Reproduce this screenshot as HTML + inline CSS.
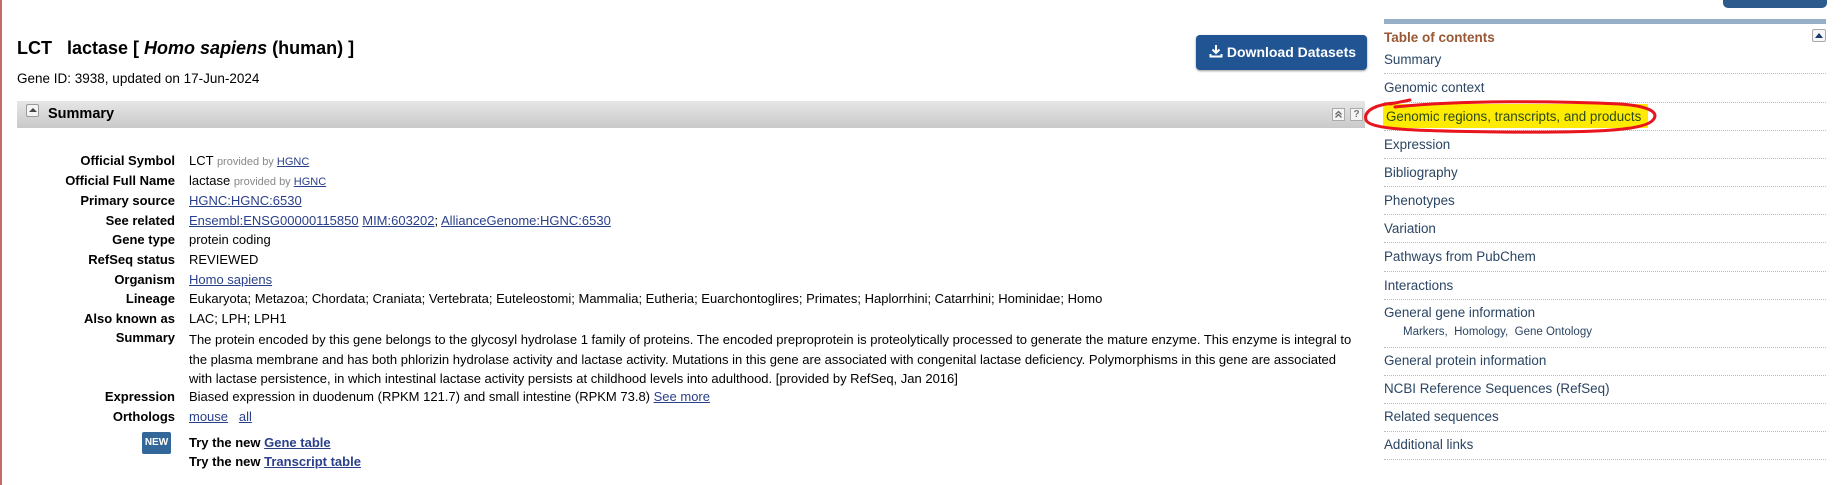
<!DOCTYPE html>
<html><head><meta charset="utf-8"><style>
*{margin:0;padding:0;box-sizing:border-box}
body{width:1842px;height:485px;background:#fff;font-family:"Liberation Sans",Arial,sans-serif;color:#000;position:relative;overflow:hidden}
.a{position:absolute;white-space:nowrap}
a{color:#2a3f8a;text-decoration:underline}
.lab{position:absolute;right:1667px;font-weight:bold;font-size:13px;white-space:nowrap;text-align:right}
.val{position:absolute;left:189px;font-size:13px;white-space:nowrap}
.pb{color:#888;font-size:11px}
.toc{position:absolute;left:1384px;width:442px;font-size:13.4px;color:#2b4563}
.sep{position:absolute;left:1384px;width:442px;border-top:1px dotted #bbb;height:0}
</style></head><body>
<div class="a" style="left:0;top:0;width:2px;height:485px;background:#c26a6a"></div>
<div class="a" style="left:1723px;top:-6px;width:104px;height:14px;background:#2d5b8e;border-radius:0 0 5px 5px"></div>

<div class="a" style="left:17px;top:38px;font-size:18px;font-weight:bold">LCT&nbsp;&nbsp; lactase [ <i>Homo sapiens</i> (human) ]</div>
<div class="a" style="left:17px;top:71px;font-size:13.5px">Gene ID: 3938, updated on 17-Jun-2024</div>

<div class="a" style="left:1196px;top:35px;width:171px;height:35px;background:#205493;border-radius:4px;box-shadow:0 1px 2px #999;color:#fff;font-weight:bold;font-size:14px;line-height:35px;padding-left:13px">
<svg width="14" height="14" viewBox="0 0 14 14" style="vertical-align:-1px"><path d="M7 1v8M3.5 5.5L7 9l3.5-3.5M1.5 10v2.5h11V10" stroke="#fff" stroke-width="2" fill="none"/></svg> Download Datasets</div>

<div class="a" style="left:17px;top:101px;width:1348px;height:27px;background:linear-gradient(#e6e6e6,#c9c9c9)"></div>
<div class="a" style="left:26px;top:104px;width:13px;height:13px;border:1px solid #999;border-radius:2px;background:#f4f4f4"><div style="position:absolute;left:2px;top:3px;border-left:4px solid transparent;border-right:4px solid transparent;border-bottom:4px solid #444"></div></div>
<div class="a" style="left:48px;top:106px;font-size:14.5px;font-weight:bold">Summary</div>
<div class="a" style="left:1332px;top:108px;width:13px;height:13px;border:1px solid #aaa;background:#f4f4f4"><svg width="11" height="11" style="position:absolute;left:0;top:0"><path d="M2.5 5.5L5.5 2.5L8.5 5.5M2.5 8.5L5.5 5.5L8.5 8.5" stroke="#666" stroke-width="1.3" fill="none"/></svg></div>
<div class="a" style="left:1350px;top:108px;width:13px;height:13px;border:1px solid #aaa;background:#f4f4f4;font-size:10px;font-weight:bold;line-height:12px;text-align:center;color:#777">?</div>

<div class="lab" style="top:153px">Official Symbol</div><div class="val" style="top:153px">LCT <span class="pb">provided by <a>HGNC</a></span></div>
<div class="lab" style="top:173px">Official Full Name</div><div class="val" style="top:173px">lactase <span class="pb">provided by <a>HGNC</a></span></div>
<div class="lab" style="top:193px">Primary source</div><div class="val" style="top:193px"><a>HGNC:HGNC:6530</a></div>
<div class="lab" style="top:213px">See related</div><div class="val" style="top:213px"><a>Ensembl:ENSG00000115850</a> <a>MIM:603202</a>; <a>AllianceGenome:HGNC:6530</a></div>
<div class="lab" style="top:232px">Gene type</div><div class="val" style="top:232px">protein coding</div>
<div class="lab" style="top:252px">RefSeq status</div><div class="val" style="top:252px">REVIEWED</div>
<div class="lab" style="top:272px">Organism</div><div class="val" style="top:272px"><a>Homo sapiens</a></div>
<div class="lab" style="top:291px">Lineage</div><div class="val" style="top:291px">Eukaryota; Metazoa; Chordata; Craniata; Vertebrata; Euteleostomi; Mammalia; Eutheria; Euarchontoglires; Primates; Haplorrhini; Catarrhini; Hominidae; Homo</div>
<div class="lab" style="top:311px">Also known as</div><div class="val" style="top:311px">LAC; LPH; LPH1</div>
<div class="lab" style="top:330px">Summary</div><div class="val" style="top:330px;line-height:19.5px">The protein encoded by this gene belongs to the glycosyl hydrolase 1 family of proteins. The encoded preproprotein is proteolytically processed to generate the mature enzyme. This enzyme is integral to<br>the plasma membrane and has both phlorizin hydrolase activity and lactase activity. Mutations in this gene are associated with congenital lactase deficiency. Polymorphisms in this gene are associated<br>with lactase persistence, in which intestinal lactase activity persists at childhood levels into adulthood. [provided by RefSeq, Jan 2016]</div>
<div class="lab" style="top:389px">Expression</div><div class="val" style="top:389px">Biased expression in duodenum (RPKM 121.7) and small intestine (RPKM 73.8) <a>See more</a></div>
<div class="lab" style="top:409px">Orthologs</div><div class="val" style="top:409px"><a>mouse</a>&nbsp;&nbsp; <a>all</a></div>
<div class="a" style="left:142px;top:432px;width:29px;height:22px;background:#336699;border-radius:2px;color:#fff;font-size:10px;font-weight:bold;text-align:center;line-height:22px">NEW</div>
<div class="val" style="top:435px;font-weight:bold">Try the new <a>Gene table</a></div>
<div class="val" style="top:454px;font-weight:bold">Try the new <a>Transcript table</a></div>

<div class="a" style="left:1384px;top:19px;width:442px;height:5px;background:#97b0c8"></div>
<div class="a" style="left:1384px;top:30px;font-size:13.5px;font-weight:bold;color:#985735">Table of contents</div>
<div class="a" style="left:1812px;top:29px;width:14px;height:13px;border:1px solid #aaa;border-radius:2px;background:#f6f6f6"><div style="position:absolute;left:2px;top:3px;border-left:4px solid transparent;border-right:4px solid transparent;border-bottom:5px solid #1a3a6a"></div></div>

<div class="a" style="left:1383px;top:104px;width:265px;height:24px;background:#ffeb00"></div>

<div class="toc" style="top:52px">Summary</div><div class="sep" style="top:73px"></div>
<div class="toc" style="top:80px">Genomic context</div><div class="sep" style="top:102px"></div>
<div class="toc" style="top:109px;left:1386px;color:#2a4a1a">Genomic regions, transcripts, and products</div><div class="sep" style="top:130px"></div>
<div class="toc" style="top:137px">Expression</div><div class="sep" style="top:158px"></div>
<div class="toc" style="top:165px">Bibliography</div><div class="sep" style="top:186px"></div>
<div class="toc" style="top:193px">Phenotypes</div><div class="sep" style="top:214px"></div>
<div class="toc" style="top:221px">Variation</div><div class="sep" style="top:242px"></div>
<div class="toc" style="top:249px">Pathways from PubChem</div><div class="sep" style="top:271px"></div>
<div class="toc" style="top:278px">Interactions</div><div class="sep" style="top:299px"></div>
<div class="toc" style="top:305px">General gene information</div>
<div class="toc" style="top:326px;left:1403px;font-size:11.5px">Markers,&nbsp; Homology,&nbsp; Gene Ontology</div><div class="sep" style="top:347px"></div>
<div class="toc" style="top:353px">General protein information</div><div class="sep" style="top:375px"></div>
<div class="toc" style="top:381px">NCBI Reference Sequences (RefSeq)</div><div class="sep" style="top:403px"></div>
<div class="toc" style="top:409px">Related sequences</div><div class="sep" style="top:431px"></div>
<div class="toc" style="top:437px">Additional links</div><div class="sep" style="top:459px"></div>

<svg class="a" style="left:0;top:0" width="1842" height="485"><path d="M1395 107C1460 100 1560 101 1620 104C1648 106 1660 112 1653 120C1645 130 1600 133 1500 132C1420 131 1370 130 1366 120C1363 110 1378 104 1395 103M1390 104L1410 100" stroke="#e8141e" stroke-width="3" fill="none" stroke-linecap="round"/></svg>
</body></html>
